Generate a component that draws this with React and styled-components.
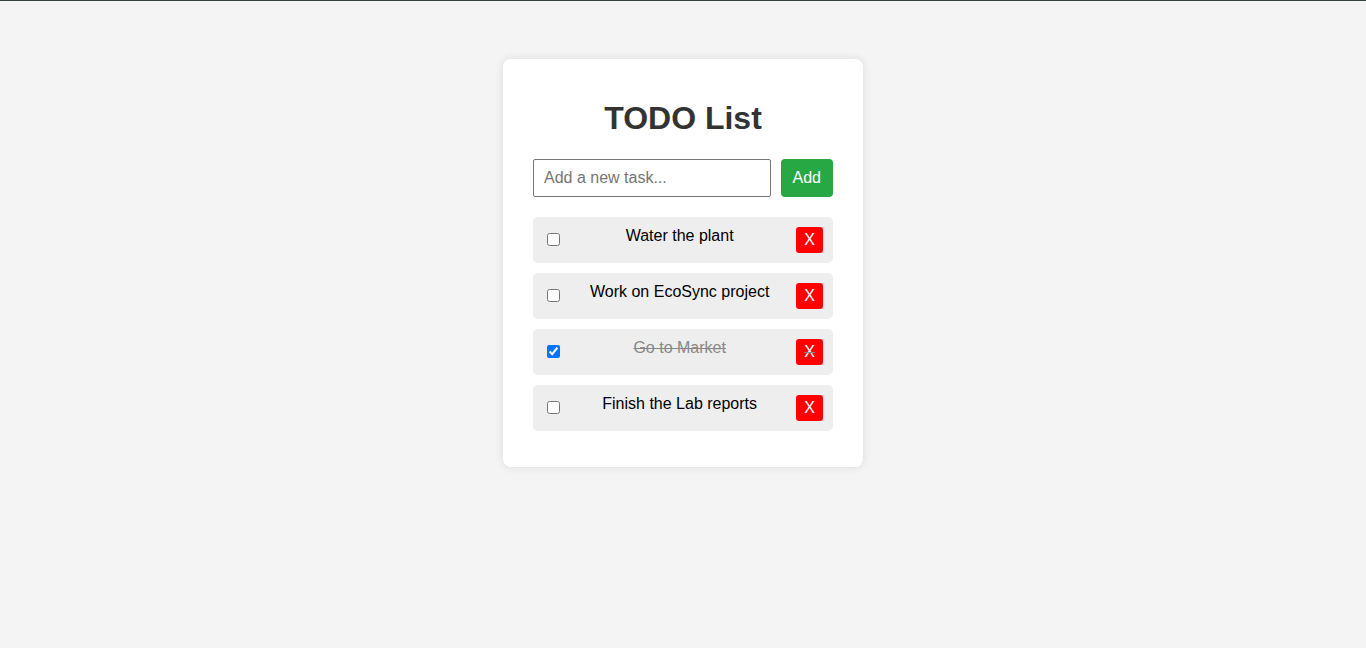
import React, { useState } from 'react'
import styled, { createGlobalStyle } from 'styled-components'

const GlobalStyle = createGlobalStyle`
body {
  margin: 0;
  background: #f4f4f4;
  font-family: "Liberation Sans", Arial, sans-serif;
  border-top: 1px solid #36413c;
}
`;

const Page = styled.div`
display: flex;
justify-content: center;
padding-top: 58px;
min-height: 600px;`;

const Card = styled.div`
width: 360px;
box-sizing: border-box;
background: #fff;
border-radius: 8px;
padding: 20px 30px;
box-shadow: 0 0 10px rgba(0, 0, 0, 0.1);
align-self: flex-start;`;

const Title = styled.h1`
text-align: center;
color: #333;
font-size: 32px;
margin: 21.44px 0;`;

const InputRow = styled.div`
display: flex;
gap: 10px;`;

const TaskInput = styled.input`
flex: 1;
min-width: 0;
height: 38px;
box-sizing: border-box;
padding: 0 10px;
font-size: 16px;
font-family: inherit;
border: 1px solid #767676;
border-radius: 2px;
&::placeholder { color: #757575; }`;

const AddButton = styled.button`
height: 38px;
padding: 0 12px;
border: none;
border-radius: 4px;
background: #28a745;
color: #fff;
font-size: 16px;
font-family: inherit;
cursor: pointer;`;

const List = styled.ul`
list-style: none;
padding: 0;
margin: 20px 0 16px;
display: flex;
flex-direction: column;
gap: 10px;`;

const Item = styled.li`
display: flex;
align-items: center;
height: 46px;
box-sizing: border-box;
padding: 0 10px;
background: #eee;
border-radius: 5px;
color: ${p => (p.done ? '#888' : '#000')};
text-decoration: ${p => (p.done ? 'line-through' : 'none')};`;

const Check = styled.input`
margin: 3px 3px 3px 4px;
width: 13px;
height: 13px;`;

const TaskText = styled.span`
flex: 1;
text-align: center;
font-size: 16px;
padding-bottom: 8px;`;

const DeleteButton = styled.button`
padding: 4px 8px;
border: none;
border-radius: 3px;
background: #f00;
color: #fff;
font-size: 16px;
font-family: inherit;
line-height: 18px;
cursor: pointer;`;

const initial = [
  { id: 1, text: 'Water the plant', done: false },
  { id: 2, text: 'Work on EcoSync project', done: false },
  { id: 3, text: 'Go to Market', done: true },
  { id: 4, text: 'Finish the Lab reports', done: false },
]

export default function App() {
  const [tasks, setTasks] = useState(initial)
  const [value, setValue] = useState('')

  const addTask = () => {
    if (!value.trim()) return
    setTasks([...tasks, { id: Date.now(), text: value, done: false }])
    setValue('')
  }

  const toggle = (id) => {
    setTasks(tasks.map(t => (t.id === id ? { ...t, done: !t.done } : t)))
  }

  const remove = (id) => {
    setTasks(tasks.filter(t => t.id !== id))
  }

  return (
    <Page>
      <GlobalStyle />
      <Card>
        <Title>TODO List</Title>
        <InputRow>
          <TaskInput
            placeholder="Add a new task..."
            value={value}
            onChange={(e) => setValue(e.target.value)}
          />
          <AddButton onClick={addTask}>Add</AddButton>
        </InputRow>
        <List>
          {tasks.map(t => (
            <Item key={t.id} done={t.done ? 1 : 0}>
              <Check type="checkbox" checked={t.done} onChange={() => toggle(t.id)} />
              <TaskText>{t.text}</TaskText>
              <DeleteButton onClick={() => remove(t.id)}>X</DeleteButton>
            </Item>
          ))}
        </List>
      </Card>
    </Page>
  )
}
